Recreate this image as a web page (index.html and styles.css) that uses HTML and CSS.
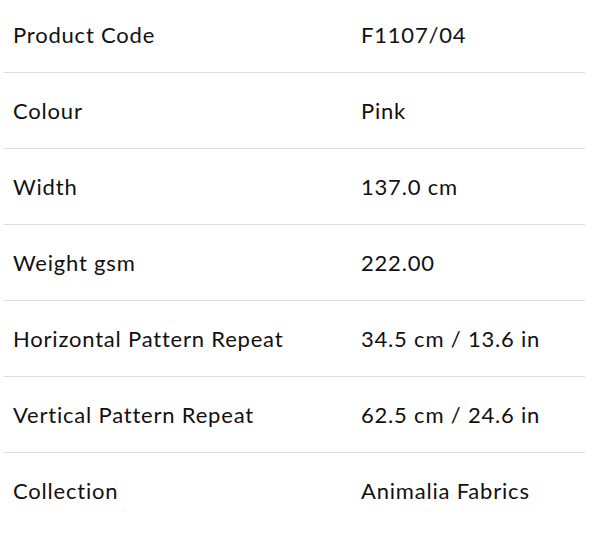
FILE: index.html
```html
<!DOCTYPE html>
<html>
<head>
<meta charset="utf-8">
<link rel="stylesheet" href="styles.css">
</head>
<body>
<div class="specs">
  <div class="row"><div class="label">Product Code</div><div class="value">F1107/04</div></div>
  <div class="row"><div class="label">Colour</div><div class="value">Pink</div></div>
  <div class="row"><div class="label">Width</div><div class="value">137.0 cm</div></div>
  <div class="row"><div class="label">Weight gsm</div><div class="value">222.00</div></div>
  <div class="row"><div class="label">Horizontal Pattern Repeat</div><div class="value">34.5 cm / 13.6 in</div></div>
  <div class="row"><div class="label">Vertical Pattern Repeat</div><div class="value">62.5 cm / 24.6 in</div></div>
  <div class="row last"><div class="label">Collection</div><div class="value">Animalia Fabrics</div></div>
</div>
</body>
</html>
```
FILE: styles.css
```css
html, body {
  margin: 0;
  padding: 0;
  background: #fff;
}
body {
  font-family: "Lato", "Liberation Sans", sans-serif;
  font-size: 22px;
  letter-spacing: 0.8px;
  color: #111;
}
.specs {
  width: 581px;
  margin: -3px 0 0 4px;
}
.row {
  display: grid;
  grid-template-columns: 348px 1fr;
  height: 75px;
  align-items: center;
  border-bottom: 1px solid #dedede;
}
.row.last {
  border-bottom: none;
}
.label, .value {
  padding-left: 9px;
}
```
